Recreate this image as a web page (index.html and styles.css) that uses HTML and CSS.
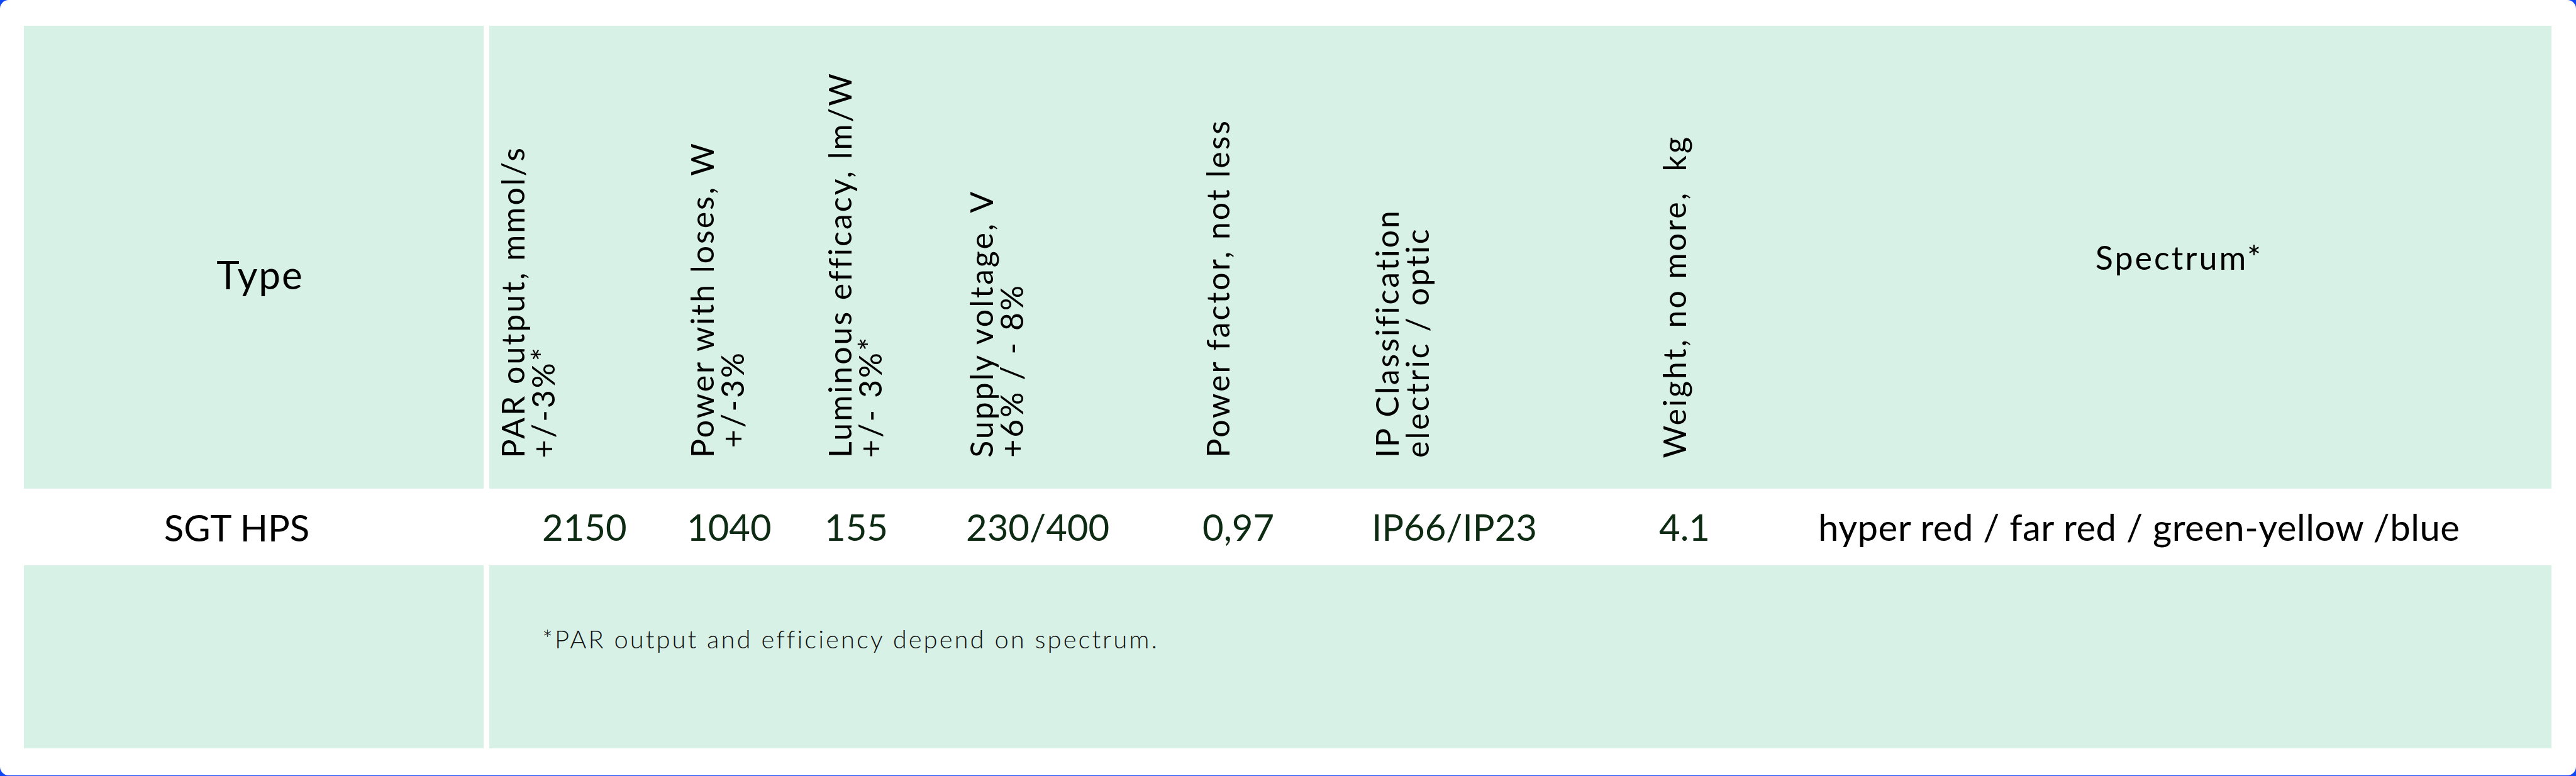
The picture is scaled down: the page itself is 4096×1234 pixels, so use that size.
FILE: index.html
```html
<!DOCTYPE html>
<html lang="en">
<head>
<meta charset="utf-8">
<title>SGT HPS specification</title>
<link rel="stylesheet" href="styles.css">
</head>
<body>
<div class="card">
  <div class="row head">
    <div class="lead green"><span class="type">Type</span></div>
    <div class="main green cols">
      <div class="vlabel">PAR output, mmol/s<br>+/-3%*</div>
      <div class="vlabel">Power with loses, W<br>&nbsp;+/-3%</div>
      <div class="vlabel">Luminous efficacy, lm/W<br>+/- 3%*</div>
      <div class="vlabel">Supply voltage, V<br>+6% / - 8%</div>
      <div class="vlabel">Power factor, not less</div>
      <div class="vlabel">IP Classification<br>electric / optic</div>
      <div class="vlabel">Weight, no more,&nbsp; kg</div>
      <div class="spec-head">Spectrum*</div>
    </div>
  </div>
  <div class="row data">
    <div class="lead"><span class="model">SGT HPS</span></div>
    <div class="main cols">
      <div class="val first">2150</div>
      <div class="val">1040</div>
      <div class="val">155</div>
      <div class="val">230/400</div>
      <div class="val">0,97</div>
      <div class="val">IP66/IP23</div>
      <div class="val">4.1</div>
      <div class="val spec">hyper red / far red / green-yellow /blue</div>
    </div>
  </div>
  <div class="row foot">
    <div class="lead green"></div>
    <div class="main green">
      <p class="note">*PAR output and efficiency depend on spectrum.</p>
    </div>
  </div>
</div>
</body>
</html>
```

FILE: styles.css
```css
html, body {
  margin: 0;
  padding: 0;
}

body {
  background: #1146f5;
  font-family: Lato, "Noto Sans", sans-serif;
  color: #000;
}

.card {
  width: 4096px;
  height: 1233px;
  box-sizing: border-box;
  background: #fff;
  border-radius: 14px;
  padding: 41px 39px 43px 38px;
  display: flex;
  flex-direction: column;
}

.row {
  display: flex;
  gap: 9px;
}

.head { height: 736px; }
.data { height: 122px; }
.foot { flex: 1; }

.green { background: #d8f1e7; }

.lead {
  width: 731px;
  flex: none;
  display: flex;
  align-items: center;
  justify-content: center;
}

.main {
  flex: 1;
  padding-left: 13px;
}

.cols {
  display: grid;
  grid-template-columns: 301px 219px 225px 376px 269px 457px 235px 1fr;
}

.type {
  font-size: 62px;
  letter-spacing: 2px;
  padding-left: 20px;
  padding-top: 54px;
}

.vlabel {
  writing-mode: vertical-rl;
  transform: rotate(180deg);
  align-self: end;
  justify-self: start;
  margin-bottom: 49px;
  font-size: 50px;
  line-height: 48px;
  letter-spacing: 3px;
  white-space: nowrap;
}

.spec-head {
  align-self: center;
  justify-self: center;
  font-size: 52px;
  letter-spacing: 3px;
}

.model {
  font-size: 58px;
  padding-right: 54px;
}

.val {
  align-self: center;
  font-size: 58px;
  line-height: 1;
  color: #0d2b12;
  white-space: nowrap;
}

.val.first { padding-left: 71px; }

.val.spec {
  color: #000;
  padding-left: 18px;
  letter-spacing: 0.5px;
}

.note {
  margin: 0;
  padding: 93px 0 0 71px;
  font-size: 40px;
  line-height: 48px;
  font-weight: 300;
  letter-spacing: 3px;
  color: #111;
}
```
